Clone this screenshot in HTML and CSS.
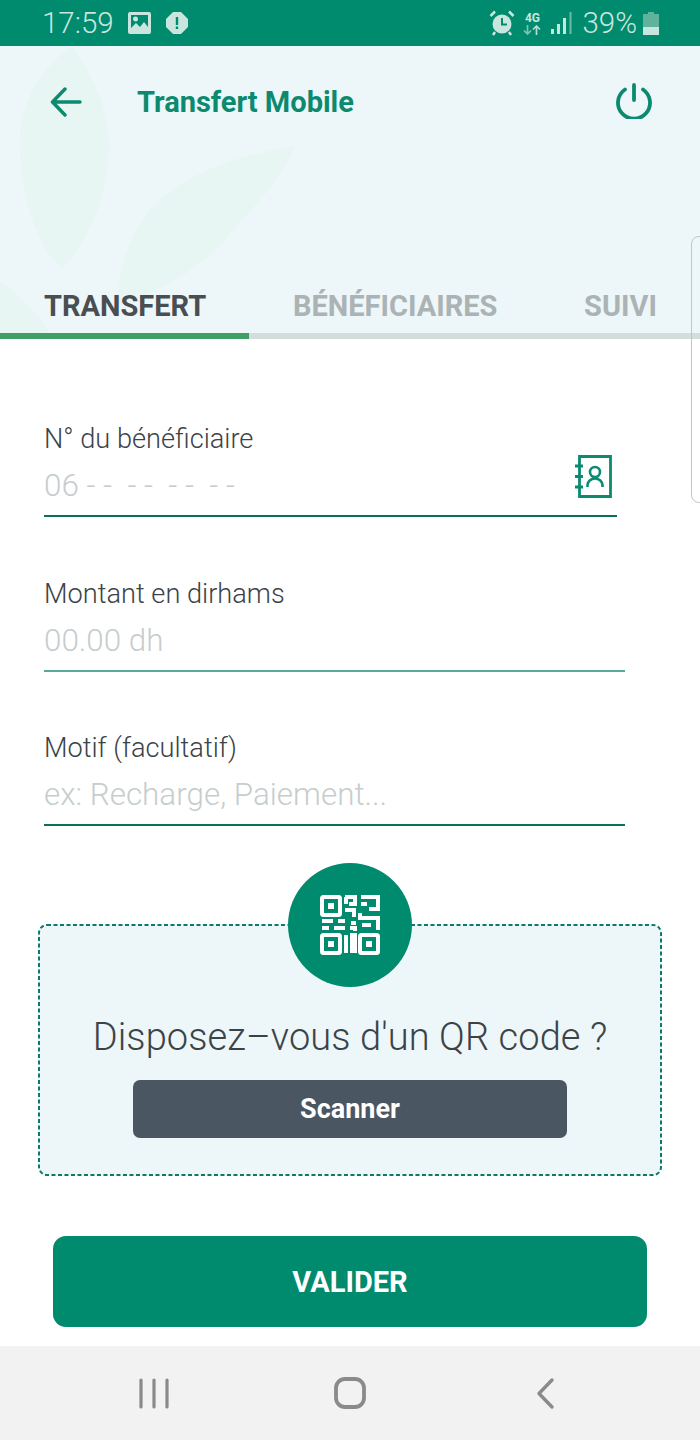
FILE: index.html
```html
<!DOCTYPE html>
<html lang="fr">
<head>
<meta charset="utf-8">
<title>Transfert Mobile</title>
<link rel="stylesheet" href="styles.css">
</head>
<body>
<div class="phone">
  <div class="status">
    <div class="status-group">
      <span class="time">17:59</span>
      <svg class="ic-img" viewBox="0 0 23 22"><path fill="#c9e6de" fill-rule="evenodd" d="M2 0h19a2 2 0 0 1 2 2v18a2 2 0 0 1-2 2H2a2 2 0 0 1-2-2V2a2 2 0 0 1 2-2zM3 3v13l5-5 4 4 4-5 4 5V3zM7.500 4.500a2.500 2.500 0 1 1 0 5 2.500 2.500 0 0 1 0-5z"/></svg>
      <svg class="ic-alert" viewBox="0 0 22 22"><path fill="#c9e6de" d="M7 0h8l7 7v8l-7 7H7l-7-7V7z"/><rect x="9.800" y="5" width="2.400" height="8" fill="#008a6e"/><rect x="9.800" y="14.500" width="2.400" height="2.500" fill="#008a6e"/></svg>
    </div>
    <div class="status-group right">
      <svg class="ic-alarm" viewBox="0 0 26 26"><circle cx="13" cy="14" r="9.500" fill="#c9e6de"/><path d="M13 8v6.500h5" fill="none" stroke="#008a6e" stroke-width="2"/><path d="M1.500 6 6 1.500M24.500 6 20 1.500M6 22l-2 3M20 22l2 3" stroke="#c9e6de" stroke-width="2.500" fill="none"/></svg>
      <div class="net"><span class="net-4g">4G</span>
        <svg class="ic-arrows" viewBox="0 0 18 10"><path d="M4.500 0v9M1 5.500 4.500 9 8 5.500" stroke="#7fc4b2" stroke-width="1.700" fill="none"/><path d="M13.500 10V1M10 4.500 13.500 1 17 4.500" stroke="#b5dcd1" stroke-width="1.700" fill="none"/></svg>
      </div>
      <svg class="ic-signal" viewBox="0 0 21 22"><rect x="0" y="17" width="3" height="5" fill="#c9e6de"/><rect x="6" y="12" width="3" height="10" fill="#c9e6de"/><rect x="12" y="6" width="3" height="16" fill="#c9e6de"/><rect x="18.500" y="0" width="2" height="22" fill="#6dbba6"/></svg>
      <span class="pct">39%</span>
      <svg class="ic-batt" viewBox="0 0 16 23"><path fill="#5fb39d" d="M5 0h6v2h5v13H0V2h5z"/><rect y="15" width="16" height="8" fill="#c9e6de"/></svg>
    </div>
  </div>

  <header class="hero">
    <svg class="leaves" viewBox="0 0 300 290"><path d="M72 0C100 40 112 75 108 115 104 165 80 205 62 222 40 205 18 150 20 90 22 50 45 20 72 0z"/><path d="M295 100C235 110 175 130 145 170 125 200 118 230 118 258 150 250 205 225 240 175 265 150 282 130 295 100z"/><path d="M0 236C20 250 40 270 52 290H0z"/></svg>
    <div class="topbar">
      <svg class="ic-back" viewBox="0 0 32 30"><path d="M30 15H3M15 2 2.500 15 15 28" fill="none" stroke="#0b8a70" stroke-width="3.400" stroke-linecap="round" stroke-linejoin="round"/></svg>
      <h1 class="title">Transfert Mobile</h1>
      <svg class="ic-power" viewBox="0 0 36 36"><path d="M18 2v15" stroke="#0b8a70" stroke-width="3.800" stroke-linecap="round" fill="none"/><path d="M9 6.500A16 16 0 1 0 27 6.500" stroke="#0b8a70" stroke-width="3.800" stroke-linecap="round" fill="none"/></svg>
    </div>
    <nav class="tabs">
      <span class="tab active">TRANSFERT</span>
      <span class="tab">BÉNÉFICIAIRES</span>
      <span class="tab">SUIVI</span>
    </nav>
    <div class="track"><div class="track-on"></div></div>
  </header>

  <main class="form">
    <div class="field short">
      <div class="label">N° du bénéficiaire</div>
      <div class="value-row dark">
        <span class="ph">06 - -  - -  - -  - -</span>
        <svg class="ic-book" viewBox="0 0 37 43"><path d="M4.500 1.500h31v40h-31z" fill="none" stroke="#0b8a70" stroke-width="2.800"/><path d="M0 11h8M0 21.500h8M0 32h8" stroke="#0b8a70" stroke-width="2.800"/><circle cx="20" cy="17" r="5" fill="none" stroke="#0b8a70" stroke-width="2.600"/><path d="M12.500 32v-2a7.500 6.500 0 0 1 15 0v2" fill="none" stroke="#0b8a70" stroke-width="2.600"/></svg>
      </div>
    </div>
    <div class="field">
      <div class="label">Montant en dirhams</div>
      <div class="value-row soft"><span class="ph">00.00 dh</span></div>
    </div>
    <div class="field">
      <div class="label">Motif (facultatif)</div>
      <div class="value-row dark"><span class="ph">ex: Recharge, Paiement...</span></div>
    </div>
  </main>

  <section class="qr-card">
    <svg class="qr-dash"><rect x="1" y="1" width="622" height="250" rx="8" ry="8"/></svg>
    <div class="qr-badge">
      <svg class="ic-qr" viewBox="0 0 60 60"><g fill="none" stroke="#fff" stroke-width="4">
        <rect x="2" y="2" width="18" height="18" rx="1.500"/><rect x="2" y="40" width="18" height="18" rx="1.500"/><rect x="40" y="40" width="18" height="18" rx="1.500"/>
        <path d="M25 2h10v7h-6M26 2v7M41 2h17v12h-9M41 9h6M25 15h9v7M40 18v5h18v12M2 26h11M18 26h7M31 28h5M2 33h7M14 33h11M30 33h5v3M42 30h9M26 40v18M32 58V40h3v18"/>
      </g><g fill="#fff"><rect x="8" y="8" width="6" height="6"/><rect x="8" y="46" width="6" height="6"/><rect x="46" y="46" width="6" height="6"/></g></svg>
    </div>
    <p class="qr-text">Disposez–vous d'un QR code ?</p>
    <button class="btn-scan">Scanner</button>
  </section>

  <div class="submit-wrap"><button class="btn-ok">VALIDER</button></div>

  <footer class="navbar">
    <svg class="nav-ic" viewBox="0 0 40 40"><path d="M7 7v27M20 7v27M33 7v27" stroke="#8a8a8a" stroke-width="3.200" stroke-linecap="round"/></svg>
    <svg class="nav-ic" viewBox="0 0 40 40"><rect x="6" y="6" width="28" height="28" rx="9" fill="none" stroke="#8a8a8a" stroke-width="3.800"/></svg>
    <svg class="nav-ic" viewBox="0 0 40 40"><path d="M26 7 13 20.500 26 34" fill="none" stroke="#8a8a8a" stroke-width="3.400" stroke-linecap="round" stroke-linejoin="round"/></svg>
  </footer>

  <div class="edge-panel"></div>
</div>
</body>
</html>
```

FILE: styles.css
```css
* { box-sizing: border-box; }
html, body { margin: 0; padding: 0; background: #fff; }
body { font-family: Roboto, "Noto Sans", sans-serif; }
.phone { position: relative; width: 700px; height: 1440px; overflow: hidden; display: flex; flex-direction: column; background: #fff; }

.status { height: 46px; flex: none; background: #008a6e; display: flex; justify-content: space-between; align-items: center; padding: 0 41px 0 42px; color: #c9e6de; }
.status-group { display: flex; align-items: center; }
.time { font-size: 29.500px; font-weight: 300; line-height: 46px; }
.ic-img { width: 23px; height: 22px; margin-left: 14px; }
.ic-alert { width: 22px; height: 22px; margin-left: 15px; }
.ic-alarm { width: 26px; height: 26px; }
.net { display: flex; flex-direction: column; align-items: center; margin-left: 8px; width: 18px; }
.net-4g { font-size: 12px; font-weight: 700; line-height: 12px; }
.ic-arrows { width: 18px; height: 10px; margin-top: 1px; }
.ic-signal { width: 21px; height: 22px; margin-left: 10px; }
.pct { font-size: 29.500px; font-weight: 300; margin-left: 10px; line-height: 46px; }
.ic-batt { width: 16px; height: 23px; margin-left: 6px; }

.hero { position: relative; flex: none; height: 293px; background: #edf6f8; padding-top: 33px; display: flex; flex-direction: column; }
.leaves { position: absolute; left: 0; top: 0; width: 300px; height: 290px; fill: #e7f5f3; }
.topbar { position: relative; display: flex; align-items: center; height: 46px; padding-left: 50px; }
.ic-back { width: 32px; height: 30px; flex: none; }
.title { margin: 0 0 0 55px; font-size: 29px; font-weight: 700; color: #0b8a70; }
.ic-power { position: absolute; right: 48px; top: 4px; width: 36px; height: 36px; }
.tabs { position: relative; display: flex; justify-content: space-between; margin-top: 155px; height: 52px; align-items: center; padding: 0 43px 0 44px; }
.tab { font-size: 29px; font-weight: 700; color: #abb3b5; white-space: nowrap; }
.tab.active { color: #484e52; }
.track { position: relative; margin-top: 1px; height: 6px; background: #d3dedc; }
.track-on { width: 249px; height: 6px; background: #3f9f66; }

.form { flex: none; padding: 82px 75px 0 44px; height: 508px; }
.field { height: 154.500px; }
.label { font-size: 27.200px; font-weight: 300; color: #3c4347; line-height: 36px; height: 36px; }
.value-row { display: flex; justify-content: space-between; align-items: flex-end; height: 60px; padding-bottom: 9px; border-bottom: 2px solid #0b8a70; position: relative; }
.value-row.dark { border-color: #0c6f5c; }
.value-row.soft { border-color: #5aa89a; }
.field.short .value-row { margin-right: 8px; }
.ph { font-size: 31.400px; font-weight: 300; color: #c6cdcd; line-height: 40px; white-space: pre; }
.ic-book { position: absolute; right: 5px; bottom: 17px; width: 37px; height: 43px; }

.qr-card { position: absolute; left: 38px; top: 924px; width: 624px; height: 252px; border-radius: 9px; background: #edf6f8; display: flex; flex-direction: column; align-items: center; }
.qr-dash { position: absolute; left: 0; top: 0; width: 624px; height: 252px; fill: none; stroke: #0b7a66; stroke-width: 2; stroke-dasharray: 4 2.500; }
.qr-badge { position: absolute; left: 250px; top: -61px; width: 124px; height: 124px; border-radius: 50%; background: #008a6e; display: flex; align-items: center; justify-content: center; }
.ic-qr { width: 60px; height: 60px; }
.qr-text { margin: 90px 0 0; font-size: 38px; font-weight: 300; line-height: 46px; color: #3c4347; letter-spacing: 0.1px; white-space: nowrap; }
.btn-scan { margin-top: 20px; width: 434px; height: 58px; border: 0; border-radius: 7px; background: #4a5662; color: #fff; font: 700 27px Roboto, sans-serif; }

.submit-wrap { position: absolute; left: 53px; right: 53px; top: 1236px; }
.btn-ok { display: block; width: 100%; height: 91px; border: 0; border-radius: 13px; background: #008a6e; color: #fff; font: 700 29px Roboto, sans-serif; }

.navbar { position: absolute; left: 0; right: 0; bottom: 0; height: 94px; background: #f2f2f2; display: flex; align-items: center; justify-content: space-between; padding: 0 134px; }
.nav-ic { width: 40px; height: 40px; }

.edge-panel { position: absolute; left: 691px; top: 236px; width: 20px; height: 267px; border: 1.500px solid #c0c5c6; border-radius: 8px; }
```
